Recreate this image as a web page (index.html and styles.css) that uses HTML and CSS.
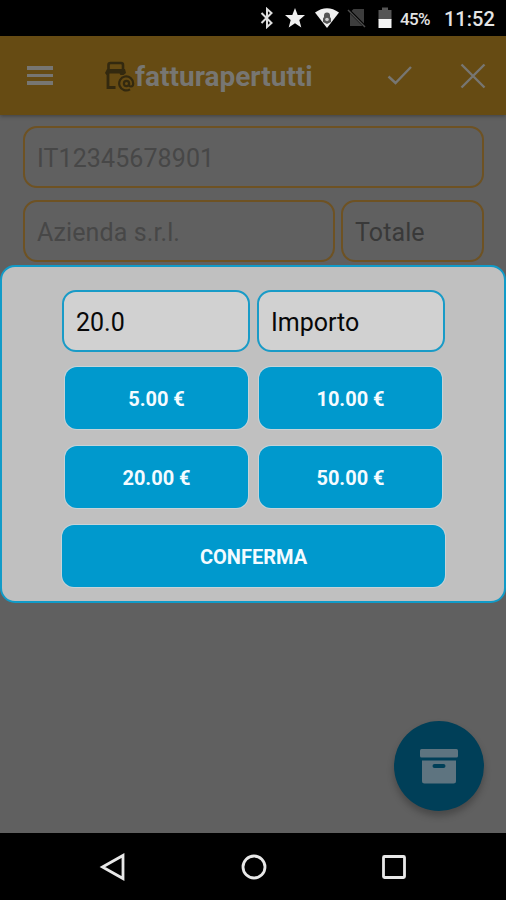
FILE: index.html
```
<!DOCTYPE html>
<html lang="it">
<head>
    <meta charset="UTF-8">
    <meta name="viewport" content="width=device-width, initial-scale=1.0">
    <title>fatturapertutti</title>
    <link rel="stylesheet" href="styles.css">
</head>
<body>

    <div class="status-bar">
        <svg class="bluetooth-icon" width="16" height="22" viewBox="0 0 16 22"><path d="M2.500 6l10 10L8 20V2l4.500 4-10 10"/></svg>
        <svg class="star-icon" width="22" height="22" viewBox="0 0 22 22"><path d="M11 1l2.700 7H21l-5.700 5 2 7.500L11 16.200 4.700 20.500l2-7.500L1 8h7.300z"/></svg>
        <svg class="wifi-icon" width="26" height="22" viewBox="0 0 26 22">
            <path d="M1 5.500Q13-3 25 5.500L13 21z" fill="#f0f0f0"/>
            <path d="M10 10V8.500a3 3 0 0 1 6 0V10l1 1.500v3.500l-4 2-4-2v-3.500z" fill="#555"/>
            <circle cx="13" cy="12.500" r="1.800" fill="#ccc"/>
        </svg>
        <svg class="sim-icon" width="20" height="22" viewBox="0 0 20 22">
            <path d="M6.500 2H17v17H3V5.500z" fill="#3d3d3d"/>
            <path d="M2 3.500l17 17" stroke="#000" stroke-width="3"/>
            <path d="M1 3l17 17" stroke="#4c4c4c" stroke-width="1.500"/>
        </svg>
        <svg class="battery-icon" width="14" height="22" viewBox="0 0 14 22">
            <path d="M.500 3H4V.500h6V3h3.500v10H.500z" fill="#555"/>
            <path d="M.500 12h13v9H.500z" fill="#f5f5f5"/>
        </svg>
        <span class="battery-level">45%</span>
        <span class="clock">11:52</span>
    </div>

    <div class="header">
        <div class="menu-button">
            <div class="menu-bar"></div>
            <div class="menu-bar"></div>
            <div class="menu-bar"></div>
        </div>
        <div class="brand">
            <svg class="brand-icon" width="31" height="32" viewBox="0 0 31 32">
                <path d="M4.500 9V5Q4.500 3 6.500 3h10.500q2 0 2 2v4" stroke-width="2.600"/>
                <path d="M3 9h18l1 4-2.500 2h-3l-1-1.500H5.500L2.500 15 1 13z" fill="#33290f" stroke="none"/>
                <path d="M4 13v14.500H11.500" stroke-width="2.800"/>
                <path d="M26 29.300A7 7 0 1 1 29.200 23.500q0 3-2.200 3t-2-3"/>
                <circle cx="22.500" cy="23.500" r="2.600"/>
            </svg>
            <span class="page-title">fatturapertutti</span>
        </div>
        <svg class="check-icon" width="26" height="22" viewBox="0 0 26 22"><path d="M1.500 11.500l7 6.500L24 2"/></svg>
        <svg class="close-icon" width="26" height="26" viewBox="0 0 26 26"><path d="M1.500 1.500l23 23M24.500 1.500l-23 23"/></svg>
    </div>

    <div class="content">
        <div class="field-row">
            <div class="field">IT12345678901</div>
        </div>
        <div class="field-row">
            <div class="field">Azienda s.r.l.</div>
            <div class="field total">Totale</div>
        </div>

        <div class="dialog">
            <div class="dialog-fields">
                <div class="amount-field">20.0</div>
                <div class="amount-field">Importo</div>
            </div>
            <div class="amount-grid">
                <button class="button">5.00 €</button>
                <button class="button">10.00 €</button>
                <button class="button">20.00 €</button>
                <button class="button">50.00 €</button>
            </div>
            <button class="button confirm">CONFERMA</button>
        </div>

        <div class="archive-button">
            <svg width="38" height="35" viewBox="0 0 38 35">
                <rect x="0" y="0" width="38" height="8.500" rx="1.500"/>
                <path fill-rule="evenodd" d="M2 11.500h34V32q0 2.500-2.500 2.500h-29Q2 34.500 2 32zM14.500 15a1.500 1.500 0 0 0 0 4h9a1.500 1.500 0 0 0 0-4z"/>
            </svg>
        </div>
    </div>

    <div class="nav-bar">
        <svg width="28" height="30" viewBox="0 0 28 30"><path d="M3.500 15L24 3.500v23z"/></svg>
        <svg width="28" height="30" viewBox="0 0 28 30"><circle cx="14" cy="15" r="11"/></svg>
        <svg width="28" height="30" viewBox="0 0 28 30"><rect x="3.500" y="4.500" width="21" height="21" rx="1"/></svg>
    </div>

</body>
</html>
```
FILE: styles.css
```
:root {
    --background: #606060;
    --header-color: #664b13;
    --header-text: #777672;
    --field-border: #6e5223;
    --primary-color: #0099cd;
    --dialog-background: #c0c0c0;
}

* {
    margin: 0;
    padding: 0;
    box-sizing: border-box;
}

body {
    font-family: Roboto, sans-serif;
    display: flex;
    flex-direction: column;
    height: 900px;
    background-color: var(--background);
    overflow: hidden;
}

svg {
    display: block;
    flex: none;
}

/* Status bar */
.status-bar {
    height: 36px;
    flex: none;
    display: flex;
    align-items: center;
    justify-content: flex-end;
    padding: 0 11px 0 0;
    background-color: #000;
    color: #e4e4e4;
}

.bluetooth-icon {
    fill: none;
    stroke: #ddd;
    stroke-width: 2;
    margin-right: 9px;
}

.star-icon {
    fill: #f0f0f0;
    margin-right: 8px;
}

.wifi-icon {
    margin-right: 7px;
}

.sim-icon {
    margin-right: 11px;
}

.battery-icon {
    margin-right: 8px;
}

.battery-level {
    font-size: 17px;
    font-weight: 500;
    width: 31px;
    margin-right: 13px;
    letter-spacing: -0.7px;
    padding-top: 2px;
}

.clock {
    font-size: 20px;
    font-weight: 500;
    padding-top: 2px;
    width: 51px;
}

/* Header */
.header {
    height: 79px;
    flex: none;
    display: flex;
    align-items: center;
    padding: 0 20px 0 27px;
    background-color: var(--header-color);
    box-shadow: 0 1px 4px rgba(0, 0, 0, 0.35);
    color: var(--header-text);
}

.menu-button {
    display: flex;
    flex-direction: column;
    gap: 4px;
    width: 26px;
}

.menu-bar {
    height: 3.5px;
    background-color: var(--header-text);
}

.brand {
    display: flex;
    align-items: center;
    margin-left: 51px;
    flex-grow: 1;
}

.brand-icon {
    fill: none;
    stroke: #33290f;
    stroke-width: 2.2;
}

.page-title {
    font-size: 28px;
    line-height: 32px;
    font-weight: 700;
    padding-top: 2px;
}

.check-icon,
.close-icon {
    fill: none;
    stroke: var(--header-text);
    stroke-width: 2.4;
}

.check-icon {
    margin-right: 47px;
}

/* Page content */
.content {
    position: relative;
    flex-grow: 1;
    padding: 11px 22px 0 23px;
}

.field-row {
    display: flex;
    gap: 6px;
    margin-bottom: 12px;
}

.field {
    flex-grow: 1;
    height: 62px;
    padding-left: 12px;
    border: 2px solid var(--field-border);
    border-radius: 14px;
    font-size: 25px;
    line-height: 62px;
    letter-spacing: 0.1px;
    color: #474747;
}

.total {
    flex: none;
    width: 143px;
    color: #393939;
}

/* Amount dialog over the dimmed page */
.dialog {
    position: absolute;
    top: 150px;
    left: 0;
    width: 100%;
    height: 338px;
    padding: 23px 59px 0 60px;
    background-color: var(--dialog-background);
    border: 2.5px solid #119bc8;
    border-radius: 15px;
}

.dialog-fields {
    display: flex;
    gap: 7px;
    margin-bottom: 15px;
}

.amount-field {
    width: 188px;
    height: 62px;
    padding-left: 12px;
    border: 2.5px solid #199bc7;
    border-radius: 14px;
    background-color: #d1d1d1;
    font-size: 25px;
    line-height: 62px;
    color: #080808;
}

.amount-grid {
    display: grid;
    grid-template-columns: 183px 183px;
    gap: 17px 11px;
    margin: 0 3px 17px;
}

.button {
    display: block;
    height: 62px;
    padding-top: 1px;
    border: none;
    border-radius: 12px;
    background-color: var(--primary-color);
    box-shadow: 0 0 0 1px #c5d3d8;
    color: #f4fbff;
    font-family: inherit;
    font-size: 20px;
    font-weight: 700;
}

.confirm {
    width: 383px;
}

/* Floating button */
.archive-button {
    position: absolute;
    right: 22px;
    bottom: 22px;
    width: 90px;
    height: 90px;
    display: flex;
    align-items: center;
    justify-content: center;
    border-radius: 50%;
    background-color: #003f58;
    box-shadow: 0 5px 7px rgba(0, 0, 0, 0.25);
    fill: #5e7480;
}

/* Android navigation */
.nav-bar {
    height: 67px;
    flex: none;
    display: flex;
    align-items: center;
    justify-content: space-between;
    padding: 0 98px 0 99px;
    background-color: #000;
    fill: none;
    stroke: #e8e8e8;
    stroke-width: 2.8;
}
```
